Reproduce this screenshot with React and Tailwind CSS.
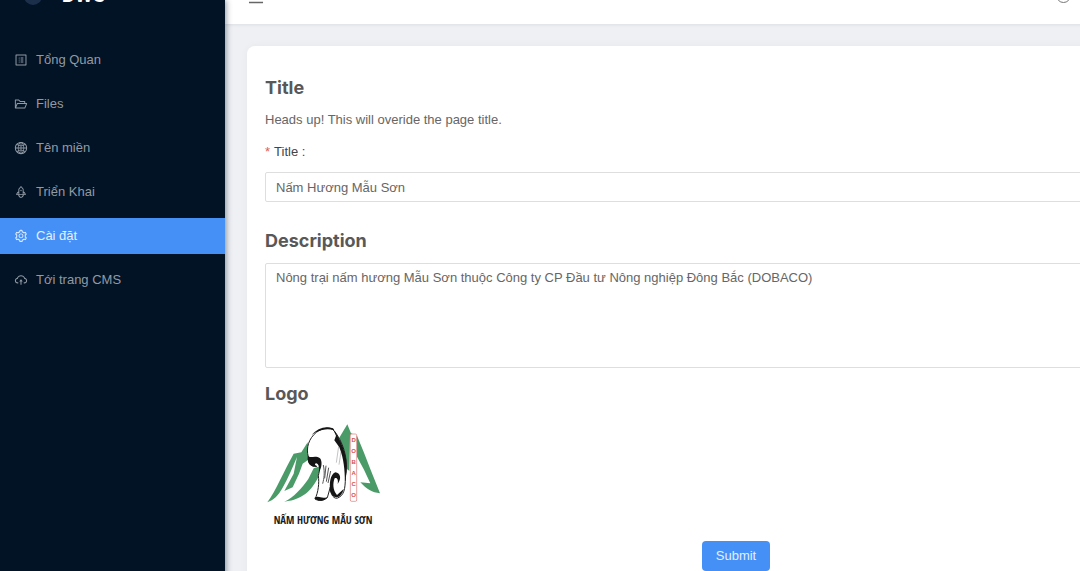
import React, { useState } from 'react';
import {
  AiOutlineProfile,
  AiOutlineFolderOpen,
  AiOutlineGlobal,
  AiOutlineRocket,
  AiOutlineSetting,
  AiOutlineCloudUpload,
  AiOutlineMenu,
} from 'react-icons/ai';

const MENU = [
  { label: 'Tổng Quan', icon: AiOutlineProfile },
  { label: 'Files', icon: AiOutlineFolderOpen },
  { label: 'Tên miền', icon: AiOutlineGlobal },
  { label: 'Triển Khai', icon: AiOutlineRocket },
  { label: 'Cài đặt', icon: AiOutlineSetting },
  { label: 'Tới trang CMS', icon: AiOutlineCloudUpload },
];

function Sidebar({ active, onSelect }) {
  return (
    <aside className="relative z-10 w-[225px] shrink-0 bg-[#021325] shadow-[1px_0_6px_rgba(0,21,41,0.45)]">
      {/* Brand, scrolled mostly out of view */}
      <div className="flex h-[42px] items-start overflow-hidden pl-6">
        <div className="-mt-4 flex items-center gap-5">
          <span className="size-[18px] rounded-full bg-[#1b2f4b]"></span>
          <span className="font-[Inter,sans-serif] text-lg leading-6 font-bold text-white">DWS</span>
        </div>
      </div>

      <nav className="flex flex-col gap-2">
        {MENU.map(({ label, icon: Icon }) => (
          <a
            key={label}
            href="#"
            onClick={() => onSelect(label)}
            className={`flex h-9 items-center gap-2 px-3.5 ${
              label === active ? 'bg-[#4490f7] text-[#e3efff]' : 'text-[#919aa4]'
            }`}
          >
            <Icon className="size-3.5" />
            {label}
          </a>
        ))}
      </nav>
    </aside>
  );
}

function Logo() {
  return (
    <svg viewBox="30 3 351 351" className="size-[117px]" role="img" aria-label="Logo">
      {/* Mountains */}
      <g fill="#4a9b68">
        <path d="M37 262 C62 228 88 166 116 116 L139 112 L158 82 L163 132 L143 146 L132 176 L113 217 L88 228 L116 176 L126 126 C112 158 100 188 82 220 C70 242 56 256 37 262Z" />
        <path d="M88 260 C116 248 140 220 160 192 L176 160 L199 152 L194 178 C176 218 150 254 88 260Z" />
        <path d="M247 78 L277 28 L288 55 L306 62 L327 113 L345 160 L375 235 C352 233 334 222 316 202 L346 205 L327 164 L306 125 L303 66 L285 63 L283 168 L266 154 Z" />
      </g>
      {/* Mushroom */}
      <path
        d="M160 126 C152 98 162 70 184 52 C205 38 226 34 238 48 C262 78 281 130 272 176 C270 210 272 236 252 247 C238 257 225 238 226 216 L217 248 C204 259 190 258 180 252 C190 232 193 204 190 182 C194 166 198 145 185 142 C174 140 178 154 185 154 C168 157 158 143 160 126Z"
        fill="#fff"
        stroke="#222"
        strokeWidth="3"
        strokeLinejoin="round"
      />
      <g fill="#151515">
        <path d="M159 122 C165 132 181 119 195 130 C203 140 200 158 192 172 C193 160 193 148 184 145 C177 145 179 154 187 154 C166 158 155 144 159 122Z" />
        <path d="M170 60 C187 40 211 31 234 40 L238 46 C214 38 190 45 170 60Z" />
        <path d="M232 38 C255 70 280 118 275 171 L270 200 C269 164 267 133 253 97 L238 76 L243 62Z" />
        <path d="M226 230 C222 205 226 178 241 172 C256 174 261 190 248 207 C251 193 245 186 239 190 C233 204 233 226 246 240 L266 222 C260 248 238 258 226 230Z" />
        <path d="M178 249 C193 239 197 254 218 246 C208 260 188 260 178 249Z" />
      </g>
      <g stroke="#555" strokeWidth="3" fill="none">
        <path d="M205 150 C210 175 207 190 203 206" />
        <path d="M213 152 L209 190 M221 158 L214 200 M227 168 L219 204" />
        <path d="M251 94 L244 143 M258 110 L252 149" opacity="0.35" />
      </g>
      {/* Vertical banner */}
      <rect x="286" y="57" width="19" height="202" rx="4" fill="#fff" stroke="#dc7474" strokeWidth="2" />
      <g fill="#cf5050" fontFamily="Liberation Sans" fontWeight="700" fontSize="18" textAnchor="middle">
        {['D', 'O', 'B', 'A', 'C', 'O'].map((letter, i) => (
          <text key={i} x="296" y={82 + i * 33}>{letter}</text>
        ))}
      </g>
      <text
        x="204"
        y="328"
        textAnchor="middle"
        fill="#1b1b1b"
        fontFamily="Open Sans Condensed, Roboto Condensed, sans-serif"
        fontWeight="700"
        fontSize="32"
      >
        NẤM HƯƠNG MẪU SƠN
      </text>
    </svg>
  );
}

function Heading({ className = '', children }) {
  return (
    <h2 className={`font-[Inter,sans-serif] text-lg leading-6 font-bold text-[#585858] ${className}`}>
      {children}
    </h2>
  );
}

export default function App() {
  const [active, setActive] = useState('Cài đặt');
  const [title, setTitle] = useState('Nấm Hương Mẫu Sơn');
  const [description, setDescription] = useState(
    'Nông trại nấm hương Mẫu Sơn thuộc Công ty CP Đầu tư Nông nghiệp Đông Bắc (DOBACO)'
  );

  return (
    <div className="h-screen overflow-hidden font-['Liberation_Sans',Arial,sans-serif] text-[13px] text-[#666]">
      <div className="flex min-h-full min-w-[1247px]">
        <Sidebar active={active} onSelect={setActive} />

        <div className="flex min-w-0 flex-1 flex-col bg-[#eef0f4]">
          <header className="flex h-6 items-start justify-between overflow-hidden bg-white pr-44 pl-[22px] shadow-[0_1px_3px_rgba(0,21,41,0.08)]">
            <button type="button" aria-label="Menu" className="-mt-3">
              <AiOutlineMenu className="size-[18px]" />
            </button>
            <span className="-mt-3 size-[15px] rounded-full border border-[#777]"></span>
          </header>

          <main className="flex flex-1 flex-col px-[22px] pt-[22px]">
            <form
              onSubmit={(e) => e.preventDefault()}
              className="flex flex-1 flex-col rounded-lg bg-white px-[18px] pt-[30px] shadow-[0_0_8px_rgba(0,0,0,0.04)]"
            >
              <Heading>Title</Heading>
              <p className="mt-2.5 leading-5">Heads up! This will overide the page title.</p>

              <label htmlFor="title" className="mt-3 leading-5 text-[#444]">
                <span className="mr-1 text-[#e0604f]">*</span>
                Title :
              </label>
              <input
                id="title"
                value={title}
                onChange={(e) => setTitle(e.target.value)}
                className="mt-2.5 h-[30px] rounded-xs border border-[#dedede] px-2.5"
              />

              <Heading className="mt-[27px]">
                <label htmlFor="description">Description</label>
              </Heading>
              <textarea
                id="description"
                value={description}
                onChange={(e) => setDescription(e.target.value)}
                className="mt-2.5 h-[105px] resize-none rounded-xs border border-[#dedede] px-2.5 py-1 leading-5"
              />

              <Heading className="mt-3.5">Logo</Heading>
              <div className="mt-2.5">
                <Logo />
              </div>

              <button
                type="submit"
                className="mt-2 mb-4 h-[30px] self-center rounded-sm bg-[#4490f7] px-3.5 text-[#e3efff]"
              >
                Submit
              </button>
            </form>
          </main>
        </div>
      </div>
    </div>
  );
}
